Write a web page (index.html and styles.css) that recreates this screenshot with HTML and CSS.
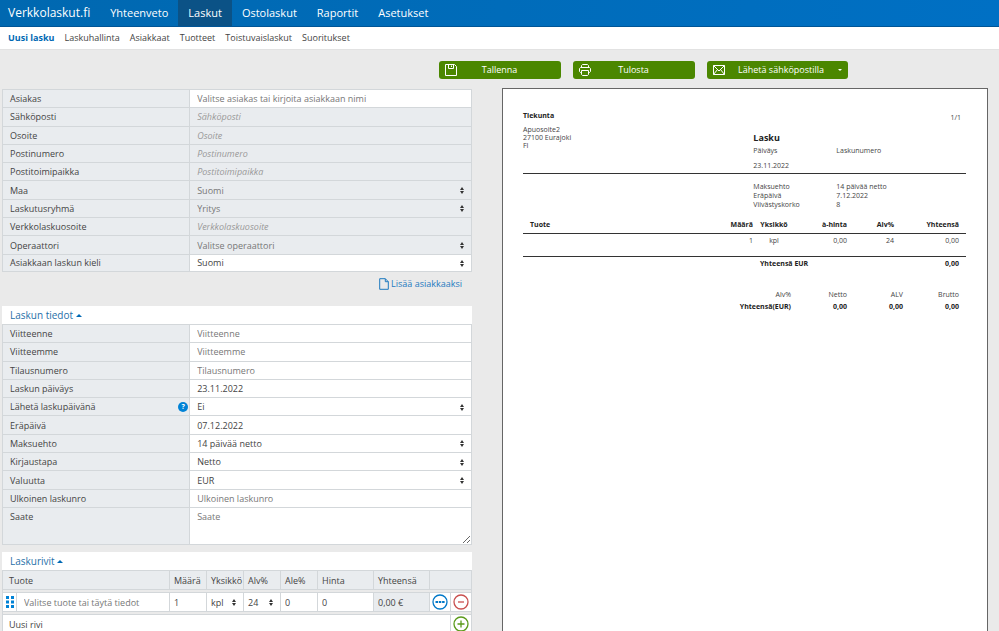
FILE: index.html
```html
<!DOCTYPE html>
<html lang="fi">
<head>
    <meta charset="UTF-8">
    <meta name="viewport" content="width=device-width, initial-scale=1.0">
    <title>Verkkolaskut.fi</title>
    <link rel="stylesheet" href="styles.css">
</head>
<body>
    <nav class="topnav">
        <a class="brand" href="#">Verkkolaskut.fi</a>
        <a href="#">Yhteenveto</a>
        <a class="active" href="#">Laskut</a>
        <a href="#">Ostolaskut</a>
        <a href="#">Raportit</a>
        <a href="#">Asetukset</a>
    </nav>
    <nav class="subnav">
        <a class="active" href="#">Uusi lasku</a>
        <a href="#">Laskuhallinta</a>
        <a href="#">Asiakkaat</a>
        <a href="#">Tuotteet</a>
        <a href="#">Toistuvaislaskut</a>
        <a href="#">Suoritukset</a>
    </nav>

    <div class="toolbar">
        <button class="btn">
            <svg class="icon" viewBox="0 0 12 12"><path d="M.5.5h9l2 2v9H.5zM3.500.5v4h5v-4M6.500 1.500v1.500"/></svg>
            <span>Tallenna</span>
        </button>
        <button class="btn">
            <svg class="icon" viewBox="0 0 12 12"><path d="M2.500 3.500v-2l1-1h5l1 1v2M2.500 8.500h-1l-1-1v-3l1-1h9l1 1v3l-1 1h-1M2.500 6.500h7v4l-1 1h-5l-1-1z"/></svg>
            <span>Tulosta</span>
        </button>
        <button class="btn btn-split">
            <svg class="icon" viewBox="0 0 12 12"><path d="M.5 1.500h11v9H.5zM.5 1.500L6 7l5.500-5.500M.5 10.500l4-5M11.500 10.500l-4-5"/></svg>
            <span>Lähetä sähköpostilla</span>
            <i class="caret-down"></i>
        </button>
    </div>

    <main class="main">
        <form class="invoice">
            <div class="fields customer">
                <div class="row"><label for="asiakas">Asiakas</label><input id="asiakas" type="text" placeholder="Valitse asiakas tai kirjoita asiakkaan nimi"></div>
                <div class="row"><label for="email">Sähköposti</label><input id="email" type="text" placeholder="Sähköposti" disabled></div>
                <div class="row"><label for="osoite">Osoite</label><input id="osoite" type="text" placeholder="Osoite" disabled></div>
                <div class="row"><label for="postinumero">Postinumero</label><input id="postinumero" type="text" placeholder="Postinumero" disabled></div>
                <div class="row"><label for="toimipaikka">Postitoimipaikka</label><input id="toimipaikka" type="text" placeholder="Postitoimipaikka" disabled></div>
                <div class="row"><label for="maa">Maa</label><div class="select"><select id="maa" disabled><option>Suomi</option></select></div></div>
                <div class="row"><label for="ryhma">Laskutusryhmä</label><div class="select"><select id="ryhma" disabled><option>Yritys</option></select></div></div>
                <div class="row"><label for="verkko">Verkkolaskuosoite</label><input id="verkko" type="text" placeholder="Verkkolaskuosoite" disabled></div>
                <div class="row"><label for="operaattori">Operaattori</label><div class="select"><select id="operaattori" disabled><option>Valitse operaattori</option></select></div></div>
                <div class="row"><label for="kieli">Asiakkaan laskun kieli</label><div class="select"><select id="kieli"><option>Suomi</option></select></div></div>
            </div>
            <a class="add-customer" href="#">
                <svg viewBox="0 0 10 12"><path d="M.7.7h5.600l3 3v7.600H.7zM6.300.7v3h3"/></svg>
                Lisää asiakkaaksi
            </a>

            <h2 class="section">Laskun tiedot <i class="caret-up"></i></h2>
            <div class="fields details">
                <div class="row"><label for="viitteenne">Viitteenne</label><input id="viitteenne" type="text" placeholder="Viitteenne"></div>
                <div class="row"><label for="viitteemme">Viitteemme</label><input id="viitteemme" type="text" placeholder="Viitteemme"></div>
                <div class="row"><label for="tilaus">Tilausnumero</label><input id="tilaus" type="text" placeholder="Tilausnumero"></div>
                <div class="row"><label for="paivays">Laskun päiväys</label><input id="paivays" type="text" value="23.11.2022"></div>
                <div class="row"><label for="laheta">Lähetä laskupäivänä <span class="help">?</span></label><div class="select"><select id="laheta"><option>Ei</option></select></div></div>
                <div class="row"><label for="erapaiva">Eräpäivä</label><input id="erapaiva" type="text" value="07.12.2022"></div>
                <div class="row"><label for="maksuehto">Maksuehto</label><div class="select"><select id="maksuehto"><option>14 päivää netto</option></select></div></div>
                <div class="row"><label for="kirjaus">Kirjaustapa</label><div class="select"><select id="kirjaus"><option>Netto</option></select></div></div>
                <div class="row"><label for="valuutta">Valuutta</label><div class="select"><select id="valuutta"><option>EUR</option></select></div></div>
                <div class="row"><label for="ulkoinen">Ulkoinen laskunro</label><input id="ulkoinen" type="text" placeholder="Ulkoinen laskunro"></div>
            </div>
            <div class="row row-note"><label for="saate">Saate</label><textarea id="saate" placeholder="Saate"></textarea></div>

            <h2 class="section section-lines">Laskurivit <i class="caret-up"></i></h2>
            <table class="lines">
                <colgroup>
                    <col class="c-drag"><col><col class="c-s"><col class="c-s"><col class="c-s"><col class="c-s"><col class="c-m"><col class="c-m"><col class="c-act"><col class="c-act">
                </colgroup>
                <thead>
                    <tr>
                        <th colspan="2" class="first">Tuote</th>
                        <th>Määrä</th>
                        <th>Yksikkö</th>
                        <th>Alv%</th>
                        <th>Ale%</th>
                        <th>Hinta</th>
                        <th>Yhteensä</th>
                        <th colspan="2"></th>
                    </tr>
                </thead>
                <tbody>
                    <tr class="gap"><td colspan="10"></td></tr>
                    <tr>
                        <td class="center"><svg class="drag" viewBox="0 0 8 12"><path d="M0 0h3v3H0zM5 0h3v3H5zM0 4.500h3v3H0zM5 4.500h3v3H5zM0 9h3v3H0zM5 9h3v3H5z"/></svg></td>
                        <td><input class="product" type="text" placeholder="Valitse tuote tai täytä tiedot" aria-label="Tuote"></td>
                        <td><input type="text" value="1" aria-label="Määrä"></td>
                        <td><div class="select"><select aria-label="Yksikkö"><option>kpl</option></select></div></td>
                        <td><div class="select"><select aria-label="Alv%"><option>24</option></select></div></td>
                        <td><input type="text" value="0" aria-label="Ale%"></td>
                        <td><input type="text" value="0" aria-label="Hinta"></td>
                        <td class="sum">0,00 €</td>
                        <td class="center"><button type="button" class="round blue" aria-label="Lisätiedot"><svg viewBox="0 0 16 16"><circle cx="8" cy="8" r="7"/><path class="dots" d="M3.500 7h2.500v2H3.500zM6.800 7h2.500v2H6.800zM10.100 7h2.500v2h-2.500z"/></svg></button></td>
                        <td class="center"><button type="button" class="round red" aria-label="Poista"><svg viewBox="0 0 16 16"><circle cx="8" cy="8" r="7"/><path d="M5 8h6"/></svg></button></td>
                    </tr>
                    <tr class="gap"><td colspan="10"></td></tr>
                    <tr>
                        <td colspan="9" class="new-line">Uusi rivi</td>
                        <td class="center"><button type="button" class="round green" aria-label="Lisää rivi"><svg viewBox="0 0 16 16"><circle cx="8" cy="8" r="7"/><path d="M4.500 8h7M8 4.500v7"/></svg></button></td>
                    </tr>
                </tbody>
            </table>
        </form>

        <section class="paper">
            <div class="paper-head">
                <div class="sender">
                    <strong>Tiekunta</strong>
                    <p>Apuosoite2<br>27100 Eurajoki<br>FI</p>
                </div>
                <div class="title">
                    <div class="page">1/1</div>
                    <h1>Lasku</h1>
                    <div class="pair"><span>Päiväys</span><span>Laskunumero</span></div>
                    <div class="date">23.11.2022</div>
                </div>
            </div>
            <div class="terms">
                <div class="pair"><span>Maksuehto</span><span>14 päivää netto</span></div>
                <div class="pair"><span>Eräpäivä</span><span>7.12.2022</span></div>
                <div class="pair"><span>Viivästyskorko</span><span>8</span></div>
            </div>
            <table class="items">
                <colgroup>
                    <col><col class="i-qty"><col class="i-unit"><col class="i-price"><col class="i-vat"><col class="i-sum">
                </colgroup>
                <thead>
                    <tr><th class="left">Tuote</th><th>Määrä</th><th class="unit">Yksikkö</th><th>à-hinta</th><th>Alv%</th><th>Yhteensä</th></tr>
                </thead>
                <tbody>
                    <tr><td></td><td>1</td><td class="unit">kpl</td><td>0,00</td><td>24</td><td>0,00</td></tr>
                </tbody>
                <tfoot>
                    <tr><td colspan="2"></td><td colspan="3" class="total">Yhteensä EUR</td><td>0,00</td></tr>
                </tfoot>
            </table>
            <table class="vat">
                <thead>
                    <tr><th>Alv%</th><th>Netto</th><th>ALV</th><th>Brutto</th></tr>
                </thead>
                <tbody>
                    <tr><td>Yhteensä(EUR)</td><td>0,00</td><td>0,00</td><td>0,00</td></tr>
                </tbody>
            </table>
        </section>
    </main>
</body>
</html>
```
FILE: styles.css
```css
* {
    margin: 0;
    padding: 0;
    box-sizing: border-box;
}
body {
    display: flex;
    flex-direction: column;
    height: 100vh;
    overflow: hidden;
    background-color: #eaeaea;
    color: #444;
    font-family: "Open Sans", "Noto Sans", sans-serif;
    font-size: 9px;
}
a {
    color: inherit;
    text-decoration: none;
}
input, select, textarea, button {
    font: inherit;
    color: inherit;
    border: 0;
    outline: 0;
    border-radius: 0;
    background: transparent;
}

/* navigation */
.topnav {
    display: flex;
    flex-shrink: 0;
    height: 27px;
    background: linear-gradient(90deg, #0068b0, #0070c4);
    border-bottom: 1px solid #005596;
    color: #fff;
    font-size: 11px;
    line-height: 26px;
}
.topnav a {
    padding: 0 10px;
}
.topnav .brand {
    padding-left: 8px;
    font-size: 12px;
}
.topnav .active {
    background-color: #0b5286;
}
.subnav {
    display: flex;
    flex-shrink: 0;
    gap: 10px;
    height: 23px;
    padding: 0 8px;
    background-color: #fff;
    border-bottom: 1px solid #e2e2e2;
    line-height: 22px;
}
.subnav .active {
    color: #0069b4;
    font-weight: bold;
}

/* toolbar */
.toolbar {
    display: flex;
    flex-shrink: 0;
    gap: 12px;
    padding: 11px 0 9px calc(44% - 1px);
}
.btn {
    display: flex;
    align-items: center;
    width: 122px;
    height: 18px;
    padding: 0 6px;
    border-radius: 3px;
    background-color: #4b8700;
    color: #fff;
    line-height: 12px;
}
.btn span {
    flex: 1;
    padding-right: 12px;
    text-align: center;
}
.btn-split {
    width: 141px;
}
.btn-split span {
    padding: 0;
}
.icon {
    width: 12px;
    height: 12px;
    fill: none;
    stroke: #fff;
}
.caret-down {
    border: 2px solid transparent;
    border-top-color: #fff;
    border-bottom: 0;
}
.caret-up {
    display: inline-block;
    vertical-align: 2px;
    border: 3px solid transparent;
    border-bottom-color: #0069b4;
    border-top: 0;
}

/* invoice form */
.main {
    display: grid;
    grid-template-columns: 470fr 486fr;
    gap: 30px;
    flex: 1;
    min-height: 0;
    padding: 0 11px 0 2px;
}
.invoice {
    padding-top: 1px;
}
.fields {
    display: grid;
    grid-auto-rows: 1fr;
    min-height: 183px;
}
.row {
    display: flex;
    border: 1px solid #d3d7da;
    border-width: 1px 1px 0;
    background-color: #fff;
}
.customer .row:last-child {
    border-bottom-width: 1px;
}
.row label {
    display: flex;
    justify-content: space-between;
    align-items: center;
    width: 40%;
    padding: 0 1px 0 7px;
    background-color: #e9ecef;
    border-right: 1px solid #d3d7da;
}
.row input, .row .select, .row textarea {
    flex: 1;
    min-width: 0;
}
.row input, .row select, .row textarea {
    padding: 0 7px;
}
.row input:disabled, .row select:disabled {
    background-color: #e9ecef;
    color: #777;
    opacity: 1;
}
::placeholder {
    color: #777;
    opacity: 1;
}
:disabled::placeholder {
    color: #999;
    font-style: italic;
}
.select {
    position: relative;
    display: flex;
}
.select select {
    flex: 1;
    min-width: 0;
    appearance: none;
}
.select::before, .select::after {
    content: "";
    position: absolute;
    right: 7px;
    border: 2px solid transparent;
    pointer-events: none;
}
.select::before {
    bottom: 50%;
    border-top: 0;
    border-bottom: 3px solid #333;
}
.select::after {
    top: 50%;
    margin-top: 1px;
    border-bottom: 0;
    border-top: 3px solid #333;
}
.help {
    width: 10px;
    height: 10px;
    border-radius: 50%;
    background-color: #0082d6;
    color: #fff;
    font-size: 7px;
    font-weight: bold;
    line-height: 10px;
    text-align: center;
}
.add-customer {
    display: flex;
    justify-content: flex-end;
    align-items: center;
    gap: 2px;
    height: 23px;
    padding-right: 10px;
    color: #1f7abf;
}
.add-customer svg {
    width: 10px;
    height: 12px;
    fill: none;
    stroke: #1f7abf;
}
.section {
    height: 18px;
    margin-top: 11px;
    padding-left: 8px;
    background-color: #fff;
    color: #1f6fa8;
    font-size: 10px;
    font-weight: normal;
    line-height: 18px;
}
.row-note {
    height: 38px;
    border-bottom-width: 1px;
}
.row-note label {
    align-items: flex-start;
    padding-top: 2px;
}
.row-note textarea {
    padding-top: 2px;
}
.section-lines {
    margin-top: 7px;
}

/* invoice lines */
.lines {
    width: 100%;
    table-layout: fixed;
    border-collapse: collapse;
    background-color: #fff;
}
.c-drag {
    width: 14px;
}
.c-s {
    width: 37px;
}
.c-m {
    width: 56px;
}
.c-act {
    width: 21px;
}
.lines th, .lines td {
    height: 19px;
    border: 1px solid #d3d7da;
}
.lines th {
    padding-left: 4px;
    background-color: #e9ecef;
    font-weight: normal;
    text-align: left;
}
.lines .first {
    padding-left: 6px;
}
.lines .gap td {
    height: 3px;
    background-color: #eaeaea;
}
.lines input, .lines select {
    display: block;
    width: 100%;
    padding-left: 4px;
}
.lines .product {
    padding-left: 7px;
}
.lines .sum {
    padding-left: 4px;
    background-color: #e9ecef;
}
.lines .new-line {
    padding-left: 6px;
}
.lines .center {
    text-align: center;
}
.drag {
    display: block;
    width: 8px;
    height: 12px;
    margin: 0 auto;
    fill: #0082d6;
}
.round {
    display: block;
    width: 16px;
    height: 16px;
    margin: 0 auto;
}
.round svg {
    display: block;
    fill: none;
    stroke: currentColor;
    stroke-width: 1.3;
}
.round .dots {
    fill: currentColor;
    stroke: none;
}
.blue {
    color: #0078c8;
}
.red {
    color: #c9504f;
}
.green {
    color: #5a9a1a;
}

/* preview */
.paper {
    padding: 23px 21px 23px 20px;
    background-color: #fff;
    border: 1px solid #666;
    border-bottom: 0;
    color: #444;
    font-size: 7px;
    line-height: 8px;
}
.paper strong, .paper h1, .items th, .items tfoot, .vat tbody {
    color: #222;
    font-weight: bold;
}
.paper-head, .pair {
    display: flex;
}
.paper-head {
    height: 62px;
    border-bottom: 1px solid #333;
}
.sender {
    width: 52%;
}
.sender p {
    margin-top: 6px;
}
.title {
    flex: 1;
}
.page {
    padding: 2px 5px 0 0;
    text-align: right;
}
.title h1 {
    padding: 10px 0 2px;
    font-size: 9px;
    line-height: 12px;
}
.pair {
    line-height: 9px;
}
.pair span:first-child {
    width: 83px;
}
.date {
    padding-top: 7px;
}
.terms {
    padding: 8px 0 8px 52%;
}
.items, .vat {
    border-collapse: collapse;
    text-align: right;
}
.items {
    width: 100%;
    table-layout: fixed;
}
.i-qty {
    width: 60px;
}
.i-unit {
    width: 28px;
}
.i-price {
    width: 66px;
}
.i-vat {
    width: 47px;
}
.i-sum {
    width: 65px;
}
.items th, .items td, .vat th, .vat td {
    padding: 0 7px;
}
.items thead, .items tbody {
    border-bottom: 1px solid #333;
}
.items th {
    height: 16px;
}
.items td {
    height: 15px;
}
.items tbody td {
    height: 23px;
    padding-bottom: 8px;
}
.items .left, .items .total {
    text-align: left;
}
.items .unit {
    padding: 0;
    text-align: center;
}
.items tbody .unit {
    padding-bottom: 8px;
}
.items .total {
    padding-left: 0;
}
.vat {
    margin: 18px 0 0 auto;
}
.vat th {
    font-weight: normal;
}
.vat th, .vat td {
    height: 12px;
    min-width: 56px;
}
```
